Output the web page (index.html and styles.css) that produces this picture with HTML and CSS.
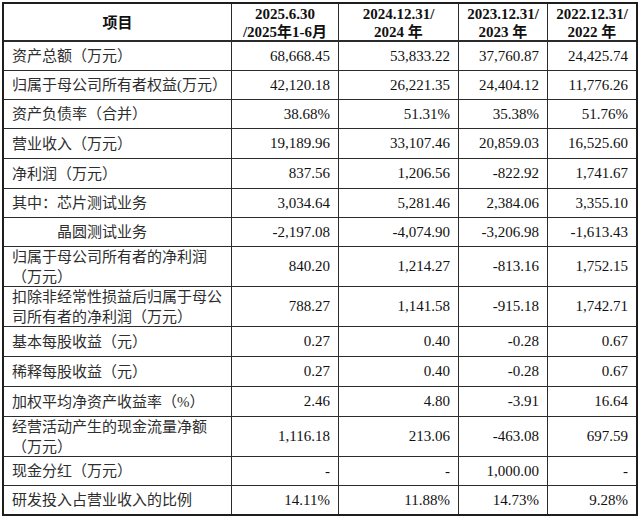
FILE: index.html
```html
<!DOCTYPE html>
<html lang="zh-CN">
<head>
<meta charset="utf-8">
<title>主要财务数据</title>
<link rel="stylesheet" href="styles.css">
</head>
<body>
<div class="sheet">
  <div class="c hd">项目</div>
  <div class="c hd">2025.6.30<br>/2025年1-6月</div>
  <div class="c hd">2024.12.31/<br>2024 年</div>
  <div class="c hd">2023.12.31/<br>2023 年</div>
  <div class="c hd">2022.12.31/<br>2022 年</div>

  <div class="c lb">资产总额（万元）</div>
  <div class="c nm">68,668.45</div><div class="c nm">53,833.22</div><div class="c nm">37,760.87</div><div class="c nm">24,425.74</div>

  <div class="c lb">归属于母公司所有者权益<span class="hp">(</span>万元）</div>
  <div class="c nm">42,120.18</div><div class="c nm">26,221.35</div><div class="c nm">24,404.12</div><div class="c nm">11,776.26</div>

  <div class="c lb">资产负债率（合并）</div>
  <div class="c nm">38.68%</div><div class="c nm">51.31%</div><div class="c nm">35.38%</div><div class="c nm">51.76%</div>

  <div class="c lb">营业收入（万元）</div>
  <div class="c nm">19,189.96</div><div class="c nm">33,107.46</div><div class="c nm">20,859.03</div><div class="c nm">16,525.60</div>

  <div class="c lb">净利润（万元）</div>
  <div class="c nm">837.56</div><div class="c nm">1,206.56</div><div class="c nm">-822.92</div><div class="c nm">1,741.67</div>

  <div class="c lb">其中：芯片测试业务</div>
  <div class="c nm">3,034.64</div><div class="c nm">5,281.46</div><div class="c nm">2,384.06</div><div class="c nm">3,355.10</div>

  <div class="c lb indent">晶圆测试业务</div>
  <div class="c nm">-2,197.08</div><div class="c nm">-4,074.90</div><div class="c nm">-3,206.98</div><div class="c nm">-1,613.43</div>

  <div class="c lb">归属于母公司所有者的净利润<br>（万元）</div>
  <div class="c nm">840.20</div><div class="c nm">1,214.27</div><div class="c nm">-813.16</div><div class="c nm">1,752.15</div>

  <div class="c lb">扣除非经常性损益后归属于母公<br>司所有者的净利润（万元）</div>
  <div class="c nm">788.27</div><div class="c nm">1,141.58</div><div class="c nm">-915.18</div><div class="c nm">1,742.71</div>

  <div class="c lb">基本每股收益（元）</div>
  <div class="c nm">0.27</div><div class="c nm">0.40</div><div class="c nm">-0.28</div><div class="c nm">0.67</div>

  <div class="c lb">稀释每股收益（元）</div>
  <div class="c nm">0.27</div><div class="c nm">0.40</div><div class="c nm">-0.28</div><div class="c nm">0.67</div>

  <div class="c lb">加权平均净资产收益率（%）</div>
  <div class="c nm">2.46</div><div class="c nm">4.80</div><div class="c nm">-3.91</div><div class="c nm">16.64</div>

  <div class="c lb">经营活动产生的现金流量净额<br>（万元）</div>
  <div class="c nm">1,116.18</div><div class="c nm">213.06</div><div class="c nm">-463.08</div><div class="c nm">697.59</div>

  <div class="c lb">现金分红（万元）</div>
  <div class="c nm">-</div><div class="c nm">-</div><div class="c nm">1,000.00</div><div class="c nm">-</div>

  <div class="c lb">研发投入占营业收入的比例</div>
  <div class="c nm">14.11%</div><div class="c nm">11.88%</div><div class="c nm">14.73%</div><div class="c nm">9.28%</div>
</div>
</body>
</html>
```

FILE: styles.css
```css
html, body {
  margin: 0;
  padding: 0;
  background: #ffffff;
}

body {
  padding: 2px 0 0 2px;
  font-family: "Liberation Serif", "Noto Sans CJK SC", serif;
  font-size: 15px;
  color: #1a1a1a;
}

.sheet {
  display: grid;
  grid-template-columns: 227px 106px 119px 88px 88px;
  grid-template-rows: 37px 28px 28px 28px 29px 29px 28px 28px 39px 39px 29px 29px 29px 39px 28px 28px;
  gap: 1px;
  width: max-content;
  background: #2b2b2b;
  border: 2px solid #1e1e1e;
}

.c {
  background: #ffffff;
  display: flex;
  align-items: center;
}

.hd {
  justify-content: center;
  text-align: center;
  font-weight: bold;
  line-height: 18px;
  color: #111111;
  border-bottom: 1px solid #2b2b2b;
  padding-top: 1px;
}

.lb {
  padding-left: 8px;
  line-height: 20px;
  color: #2e2e2e;
  white-space: nowrap;
}

.lb.indent {
  padding-left: 53px;
}

.hp {
  font-family: "Liberation Serif", serif;
}

.nm {
  justify-content: flex-end;
  padding-right: 8px;
  color: #111111;
}
```
